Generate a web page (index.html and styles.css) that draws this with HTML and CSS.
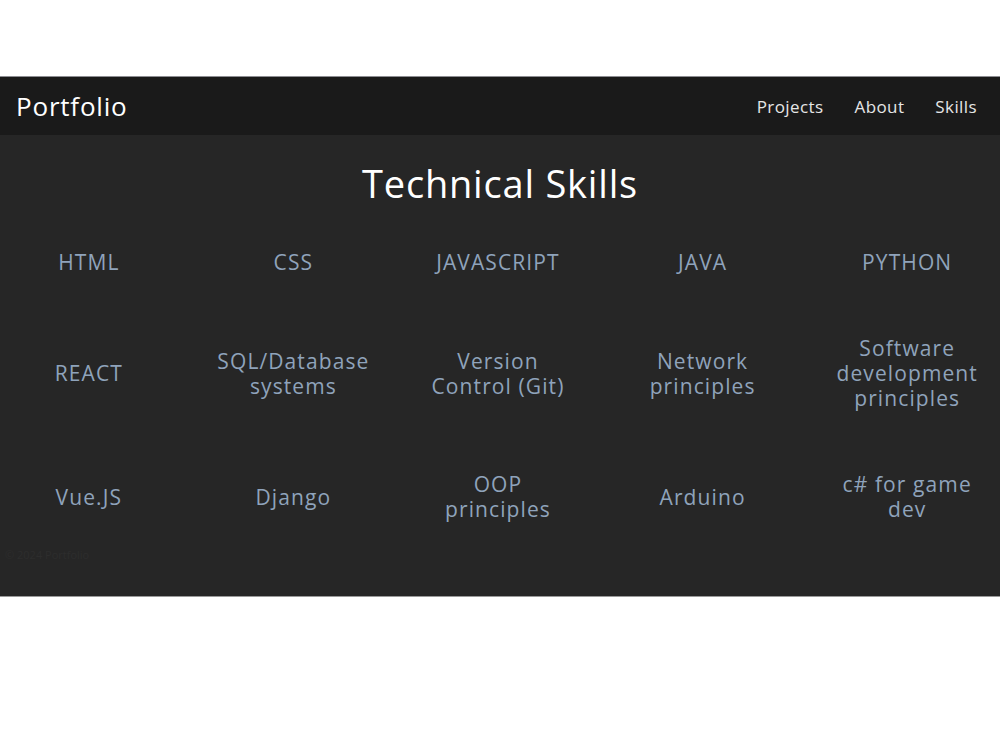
FILE: index.html
```html
<!DOCTYPE html>
<html lang="en">
<head>
    <meta charset="UTF-8">
    <meta name="viewport" content="width=device-width, initial-scale=1.0">
    <title>Portfolio</title>
    <link rel="stylesheet" href="styles.css">
</head>
<body>
    <div class="page">
        <header class="navbar">
            <a href="#" class="brand">Portfolio</a>
            <nav class="nav-links">
                <a href="#projects">Projects</a>
                <a href="#about">About</a>
                <a href="#skills">Skills</a>
            </nav>
        </header>

        <main id="skills" class="skills-section">
            <h1>Technical Skills</h1>
            <div class="skills-grid">
                <div class="skill">HTML</div>
                <div class="skill">CSS</div>
                <div class="skill">JAVASCRIPT</div>
                <div class="skill">JAVA</div>
                <div class="skill">PYTHON</div>

                <div class="skill">REACT</div>
                <div class="skill">SQL/Database systems</div>
                <div class="skill">Version Control (Git)</div>
                <div class="skill">Network principles</div>
                <div class="skill">Software development principles</div>

                <div class="skill">Vue.JS</div>
                <div class="skill">Django</div>
                <div class="skill">OOP principles</div>
                <div class="skill">Arduino</div>
                <div class="skill">c# for game dev</div>
            </div>
            <!-- Footer note, barely visible on the dark background -->
            <p class="footnote">© 2024 Portfolio</p>
        </main>
    </div>
</body>
</html>
```

FILE: styles.css
```css
body {
    font-family: 'Open Sans', 'DejaVu Sans', sans-serif;
    background-color: #fff;
    margin: 0;
}

.page {
    margin-top: 76px;
    border-top: 1px solid #8d8d92;
    border-bottom: 1px solid #9a9a9a;
}

.navbar {
    background-color: #1a1a1a;
    height: 58px;
    display: flex;
    align-items: center;
    justify-content: space-between;
    padding: 0 23px 0 16px;
}

.brand {
    color: #fff;
    font-size: 26px;
    letter-spacing: 0.8px;
    text-decoration: none;
}

.nav-links {
    display: flex;
    gap: 31px;
}

.nav-links a {
    color: #e6e6e6;
    font-size: 17px;
    letter-spacing: 0.4px;
    text-decoration: none;
}

.skills-section {
    background-color: #262626;
    height: 461px;
    box-sizing: border-box;
    padding-top: 26px;
}

h1 {
    text-align: center;
    color: #fff;
    font-size: 38px;
    font-weight: 400;
    letter-spacing: 0.8px;
    line-height: 44px;
    margin: 0 0 30px;
}

.skills-grid {
    display: grid;
    grid-template-columns: repeat(5, 1fr);
    column-gap: 27px;
    row-gap: 31px;
    padding-right: 4px;
    align-items: center;
}

.skill {
    text-align: center;
    color: #8fa3bb;
    font-size: 21px;
    letter-spacing: 1.1px;
    line-height: 25px;
    padding: 15px 11px;
}

.footnote {
    margin: 10px 0 0 5px;
    font-size: 11px;
    color: #2d2d2d;
}
```
